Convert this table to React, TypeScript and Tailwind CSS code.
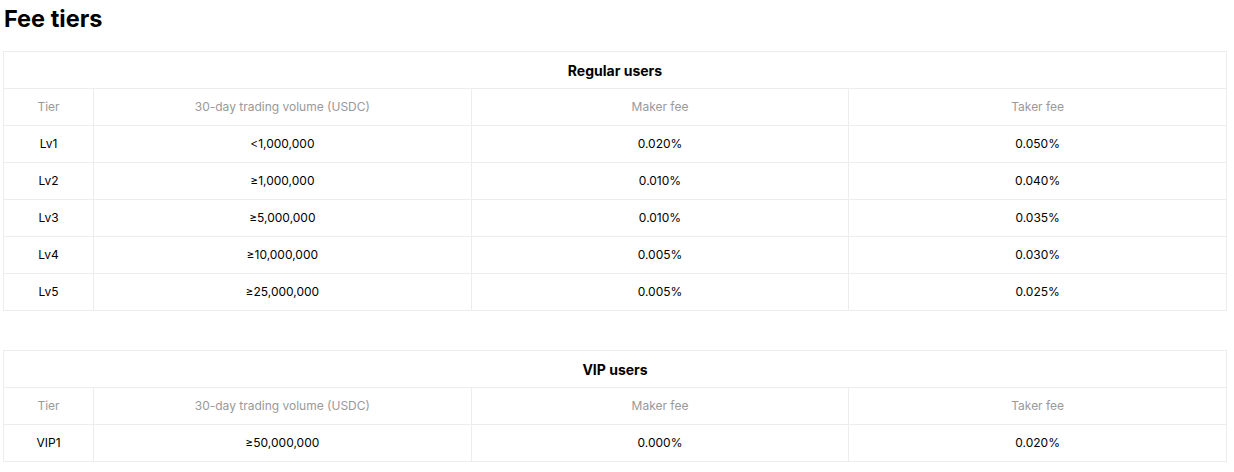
const regular = [
  { tier: "Lv1", volume: "<1,000,000", maker: "0.020%", taker: "0.050%" },
  { tier: "Lv2", volume: "≥1,000,000", maker: "0.010%", taker: "0.040%" },
  { tier: "Lv3", volume: "≥5,000,000", maker: "0.010%", taker: "0.035%" },
  { tier: "Lv4", volume: "≥10,000,000", maker: "0.005%", taker: "0.030%" },
  { tier: "Lv5", volume: "≥25,000,000", maker: "0.005%", taker: "0.025%" },
];

const vip = [{ tier: "VIP1", volume: "≥50,000,000", maker: "0.000%", taker: "0.020%" }];

type Row = (typeof regular)[number];

function FeeTable({ title, rows }: { title: string; rows: Row[] }) {
  return (
    <table className="w-[1224px] table-fixed border-collapse text-center text-[12px] text-black">
      <colgroup>
        <col className="w-[90px]" />
        <col />
        <col />
        <col />
      </colgroup>
      <thead>
        <tr className="h-[37px]">
          <th colSpan={4} className="border border-[#ededed] text-[14px] font-bold">
            {title}
          </th>
        </tr>
        <tr className="h-[37px] text-[#999999]">
          <th className="border border-[#ededed] font-normal">Tier</th>
          <th className="border border-[#ededed] font-normal">30-day trading volume (USDC)</th>
          <th className="border border-[#ededed] font-normal">Maker fee</th>
          <th className="border border-[#ededed] font-normal">Taker fee</th>
        </tr>
      </thead>
      <tbody>
        {rows.map((r) => (
          <tr key={r.tier} className="h-[37px]">
            <td className="border border-[#ededed]">{r.tier}</td>
            <td className="border border-[#ededed]">{r.volume}</td>
            <td className="border border-[#ededed]">{r.maker}</td>
            <td className="border border-[#ededed]">{r.taker}</td>
          </tr>
        ))}
      </tbody>
    </table>
  );
}

export default function App() {
  return (
    <div className="min-h-screen bg-white px-[3px] pt-[3px] font-['Inter','Noto_Sans',sans-serif]">
      <h1 className="mb-[16px] pl-px text-[23.5px] font-bold leading-[32px] text-black">Fee tiers</h1>
      <FeeTable title="Regular users" rows={regular} />
      <div className="h-[39px]" />
      <FeeTable title="VIP users" rows={vip} />
    </div>
  );
}
